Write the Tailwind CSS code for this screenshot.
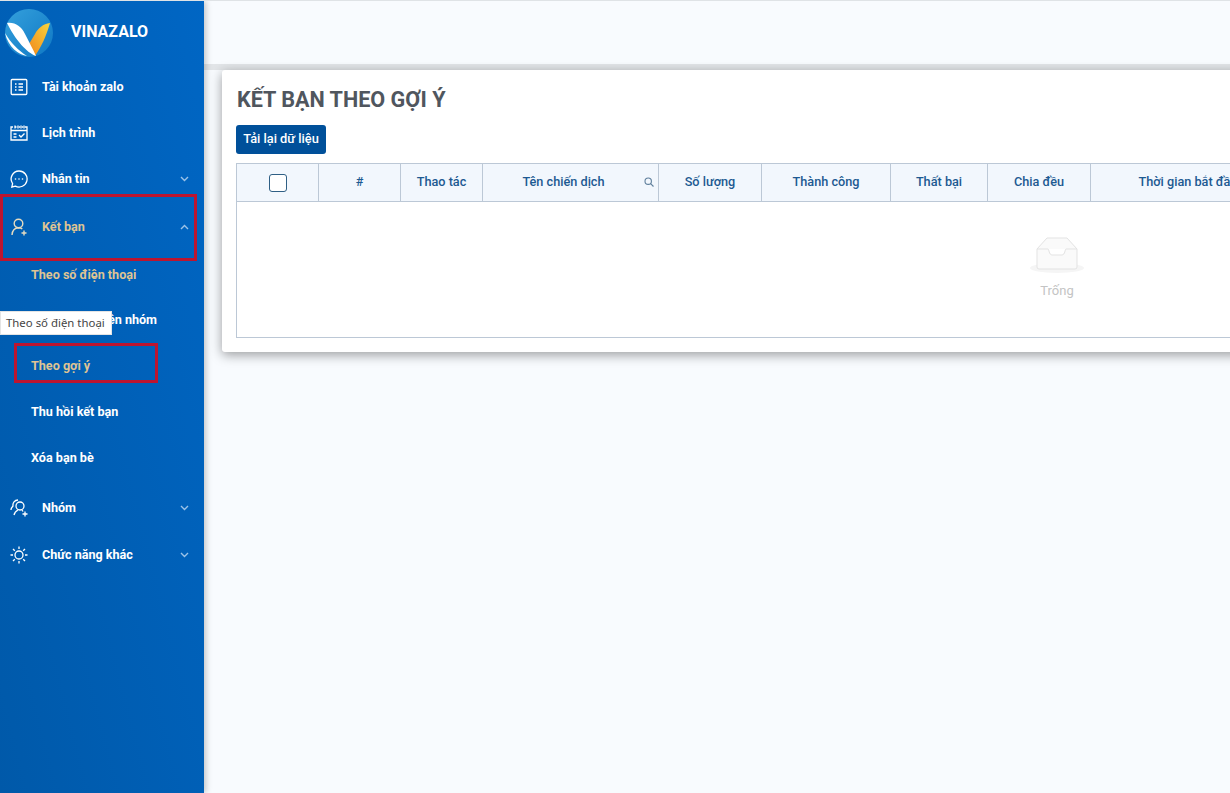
<!DOCTYPE html>
<html lang="vi">
<head>
<meta charset="utf-8">
<script src="https://cdn.jsdelivr.net/npm/@tailwindcss/browser@4"></script>
<title>Kết bạn theo gợi ý</title>
</head>
<body class="font-['Roboto',sans-serif] bg-[#f8fbfe] overflow-hidden">
<div class="relative w-[1230px] h-[793px] overflow-hidden flex border-t border-[#dfe3e6]">
  <aside class="relative z-10 w-[204px] shrink-0 h-full bg-gradient-to-tr from-[#0059a9] to-[#0066c4] shadow-[2px_0_6px_rgba(0,0,0,0.22)] text-white text-[12.6px] font-bold">
    <div class="h-[63px] flex items-center pl-[5px]">
      <svg class="w-[48px] h-[48px]" viewBox="0 0 48 48">
        <defs><linearGradient id="lg" x1="0" y1="0" x2="1" y2="1"><stop offset="0" stop-color="#34a0dc"/><stop offset="1" stop-color="#0f78c4"/></linearGradient>
        <linearGradient id="vg" x1="0" y1="1" x2="1" y2="0"><stop offset="0" stop-color="#f0861c"/><stop offset="1" stop-color="#f9d53c"/></linearGradient></defs>
        <circle cx="24" cy="24" r="24" fill="url(#lg)"/>
        <path d="M45 14C38 15 33 19 30 25L24 35 30 47C36 38 41 28 45 14Z" fill="url(#vg)"/>
        <path d="M2 14C10 13 16 17 20 25 24 33 28 40 31 47 25 45 13 36 2 14Z" fill="#fff"/>
        <path d="M0 24C5 33 14 42 22 47 14 46 3 38 0 24Z" fill="#fff"/>
      </svg>
      <span class="ml-[18px] text-[16px] font-bold mt-[-2px]">VINAZALO</span>
    </div>
    <nav>
      <div class="h-[46px] flex items-center">
        <svg class="ml-[10px] w-[18px] h-[18px]" viewBox="0 0 18 18" fill="none" stroke="#fff" stroke-width="1.3"><rect x="1.2" y="1.5" width="15.6" height="15" rx="1"/><path d="M5 6h1.500M8.500 6H13M5 9h1.500M8.500 9H13M5 12h1.500M8.500 12H13"/></svg>
        <span class="ml-[14px]">Tài khoản zalo</span>
      </div>
      <div class="h-[46px] flex items-center">
        <svg class="ml-[10px] w-[18px] h-[18px]" viewBox="0 0 18 18" fill="none" stroke="#fff" stroke-width="1.3"><path d="M3 3H1v13h16V3h-2M5.500 3h1M9 3h1M12 3h1M1 6.500h16M5 1.500v3M8 1.500v3M11 1.500v3M14 1.500v3M3.500 10h3M3.500 13h3M9 11l2 2 3.500-3.500"/></svg>
        <span class="ml-[14px]">Lịch trình</span>
      </div>
      <div class="h-[46px] flex items-center">
        <svg class="ml-[10px] w-[18px] h-[18px]" viewBox="0 0 18 18" fill="none" stroke="#fff" stroke-width="1.3"><path d="M9 1a8 8 0 1 1-3.600 15.100L1.800 17l.8-3.400A8 8 0 0 1 9 1Z"/><circle cx="5.500" cy="9" r=".8" fill="#fff" stroke="none"/><circle cx="9" cy="9" r=".8" fill="#fff" stroke="none"/><circle cx="12.500" cy="9" r=".8" fill="#fff" stroke="none"/></svg>
        <span class="ml-[14px] flex-1">Nhắn tin</span>
        <svg class="mr-[15px] w-[9px] h-[6px]" viewBox="0 0 9 6" fill="none" stroke="#9cc3e8" stroke-width="1.4"><path d="M1 1l3.500 3.500L8 1"/></svg>
      </div>
      <div class="h-[46px] mt-[2px] flex items-center text-[#dfc493]">
        <svg class="ml-[10px] w-[18px] h-[18px]" viewBox="0 0 18 18" fill="none" stroke="#e6dcc0" stroke-width="1.4"><circle cx="8.500" cy="5.500" r="4.300"/><path d="M2 17c.3-4 2.500-7 6.500-7.200 1.500 0 2.800.4 3.800 1M11.500 15h5M14 12.500v5"/></svg>
        <span class="ml-[14px] flex-1">Kết bạn</span>
        <svg class="mr-[15px] w-[9px] h-[6px]" viewBox="0 0 9 6" fill="none" stroke="#9cc3e8" stroke-width="1.4"><path d="M1 5l3.500-3.500L8 5"/></svg>
      </div>
      <div class="mt-[2px]">
        <div class="h-[46px] flex items-center pl-[31px] text-[#dfc493]">Theo số điện thoại</div>
        <div class="h-[45px] flex items-center pl-[31px]">Theo thành viên nhóm</div>
        <div class="h-[46px] flex items-center pl-[31px] text-[#dfc493]">Theo gợi ý</div>
        <div class="h-[46px] flex items-center pl-[31px]">Thu hồi kết bạn</div>
        <div class="h-[46px] flex items-center pl-[31px]">Xóa bạn bè</div>
      </div>
      <div class="h-[46px] mt-[4px] flex items-center">
        <svg class="ml-[10px] w-[18px] h-[18px]" viewBox="0 0 18 18" fill="none" stroke="#fff" stroke-width="1.300"><circle cx="10" cy="7" r="4"/><path d="M4 16c.5-2.500 2-4 4-5M1 11c0-2 1-3 2-4-.5-3 1.500-6 5-6M12.500 15h5M15 12.500v5M12 11l1 1.500"/></svg>
        <span class="ml-[14px] flex-1">Nhóm</span>
        <svg class="mr-[15px] w-[9px] h-[6px]" viewBox="0 0 9 6" fill="none" stroke="#9cc3e8" stroke-width="1.4"><path d="M1 1l3.500 3.500L8 1"/></svg>
      </div>
      <div class="h-[46px] mt-[1px] flex items-center">
        <svg class="ml-[10px] w-[18px] h-[18px]" viewBox="0 0 18 18" fill="none" stroke="#fff" stroke-width="1.300"><circle cx="9" cy="9" r="4"/><path d="M9 .5v2.500M9 15v2.500M.5 9H3M15 9h2.500M3 3l1.800 1.800M13.200 13.200 15 15M3 15l1.800-1.800M13.200 4.800 15 3"/></svg>
        <span class="ml-[14px] flex-1">Chức năng khác</span>
        <svg class="mr-[15px] w-[9px] h-[6px]" viewBox="0 0 9 6" fill="none" stroke="#9cc3e8" stroke-width="1.4"><path d="M1 1l3.500 3.500L8 1"/></svg>
      </div>
    </nav>
    <div class="absolute left-0 top-[193px] w-[197px] h-[67px] border-[3px] border-[#bd1530]"></div>
    <div class="absolute left-[14px] top-[342px] w-[144px] h-[40px] border-[3px] border-[#bd1530]"></div>
    <div class="absolute left-0 top-[310px] w-[112px] h-[24px] bg-white border border-[#e4e4e4] flex items-center pl-[5px] text-[11.400px] font-normal text-[#444] whitespace-nowrap font-['Noto_Sans',sans-serif]">Theo số điện thoại</div>
  </aside>
  <main class="flex-1 min-w-0 flex flex-col">
    <div class="h-[69px] shrink-0 bg-[#f8fbfe] border-b-[6px] border-[#e2e5e8]"></div>
    <div class="pl-[18px]">
      <section class="w-[1100px] h-[282px] bg-white rounded-l-[3px] shadow-[0_3px_12px_rgba(0,0,0,0.38)] pl-[14px] pt-[16px]">
        <h1 class="ml-[1px] text-[21.600px] leading-[28px] font-bold text-[#50565e]">KẾT BẠN THEO GỢI Ý</h1>
        <button class="mt-[11px] block w-[90px] h-[29px] pb-[2px] rounded-[3px] bg-[#00509a] text-white text-[12.800px] font-medium">Tải lại dữ liệu</button>
        <div class="mt-[9px] w-[1100px] h-[175px] border border-[#bcc8d6] border-r-0 flex flex-col">
          <div class="h-[38px] shrink-0 flex border-b border-[#bcc8d6] bg-[#f2f7fd] text-[12.700px] font-medium text-[#1d5a92]">
            <div class="w-[82px] shrink-0 border-r border-[#bcc8d6] flex items-center justify-center"><span class="block w-[18px] h-[18px] rounded-[3px] border-[1.5px] border-[#2f5f85] bg-white"></span></div>
            <div class="w-[82px] shrink-0 border-r border-[#bcc8d6] flex items-center justify-center pb-[2px]">#</div>
            <div class="w-[82px] shrink-0 border-r border-[#bcc8d6] flex items-center justify-center pb-[2px]">Thao tác</div>
            <div class="relative w-[176px] shrink-0 border-r border-[#bcc8d6] flex items-center justify-center pr-[14px] pb-[2px]">Tên chiến dịch
              <svg class="absolute right-[4px] top-[13px] w-[10px] h-[10px]" viewBox="0 0 10 10" fill="none" stroke="#5f7f9c" stroke-width="1.100"><circle cx="4.200" cy="4.200" r="3.200"/><path d="M6.600 6.600 9.500 9.500"/></svg>
            </div>
            <div class="w-[103px] shrink-0 border-r border-[#bcc8d6] flex items-center justify-center pb-[2px]">Số lượng</div>
            <div class="w-[129px] shrink-0 border-r border-[#bcc8d6] flex items-center justify-center pb-[2px]">Thành công</div>
            <div class="w-[97px] shrink-0 border-r border-[#bcc8d6] flex items-center justify-center pb-[2px]">Thất bại</div>
            <div class="w-[103px] shrink-0 border-r border-[#bcc8d6] flex items-center justify-center pb-[2px]">Chia đều</div>
            <div class="w-[194px] shrink-0 flex items-center justify-center whitespace-nowrap pb-[2px]">Thời gian bắt đầu</div>
          </div>
        </div>
      </section>
    </div>
    <div class="absolute left-[1028px] top-[236px] w-[58px] flex flex-col items-center">
      <svg class="w-[56px] h-[38px]" viewBox="0 0 56 38">
        <ellipse cx="28" cy="31" rx="27" ry="5" fill="#f5f5f5"/>
        <path d="M18 1h20l10 11v18a2 2 0 0 1-2 2H10a2 2 0 0 1-2-2V12Z" fill="#fafafa" stroke="#e3e3e3"/>
        <path d="M8 12h11c1 0 1 6 4 6h10c3 0 3-6 4-6h11" fill="#fff" stroke="#e3e3e3"/>
      </svg>
      <span class="mt-[7px] text-[13px] leading-[18px] text-[#c4c4c4]">Trống</span>
    </div>
  </main>
</div>
</body>
</html>
